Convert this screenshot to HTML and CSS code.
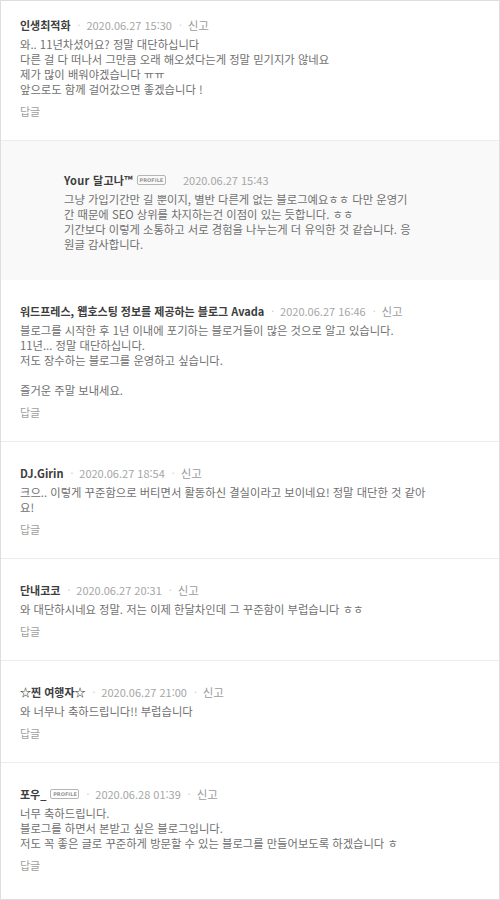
FILE: index.html
```html
<!DOCTYPE html>
<html lang="ko">
<head>
<meta charset="utf-8">
<link rel="stylesheet" href="styles.css">
</head>
<body>
<div class="comments">
  <div class="comment first">
    <div class="meta"><span class="name">인생최적화</span><span class="sep">·</span><span class="date">2020.06.27 15:30</span><span class="sep">·</span><span class="report">신고</span></div>
    <p class="text">와.. 11년차셨어요? 정말 대단하십니다<br>다른 걸 다 떠나서 그만큼 오래 해오셨다는게 정말 믿기지가 않네요<br>제가 많이 배워야겠습니다 ㅠㅠ<br>앞으로도 함께 걸어갔으면 좋겠습니다 !</p>
    <div class="reply-link">답글</div>
  </div>
  <div class="reply">
    <div class="meta"><span class="name">Your 달고나™</span><span class="badge">PROFILE</span><span class="date wide">2020.06.27 15:43</span></div>
    <p class="text">그냥 가입기간만 길 뿐이지, 별반 다른게 없는 블로그예요ㅎㅎ 다만 운영기<br>간 때문에 SEO 상위를 차지하는건 이점이 있는 듯합니다. ㅎㅎ<br>기간보다 이렇게 소통하고 서로 경험을 나누는게 더 유익한 것 같습니다. 응<br>원글 감사합니다.</p>
  </div>
  <div class="comment">
    <div class="meta"><span class="name">워드프레스, 웹호스팅 정보를 제공하는 블로그 Avada</span><span class="sep">·</span><span class="date">2020.06.27 16:46</span><span class="sep">·</span><span class="report">신고</span></div>
    <p class="text">블로그를 시작한 후 1년 이내에 포기하는 블로거들이 많은 것으로 알고 있습니다.<br>11년... 정말 대단하십니다.<br>저도 장수하는 블로그를 운영하고 싶습니다.<br><br>즐거운 주말 보내세요.</p>
    <div class="reply-link">답글</div>
  </div>
  <div class="comment">
    <div class="meta"><span class="name">DJ.Girin</span><span class="sep">·</span><span class="date">2020.06.27 18:54</span><span class="sep">·</span><span class="report">신고</span></div>
    <p class="text">크으.. 이렇게 꾸준함으로 버티면서 활동하신 결실이라고 보이네요! 정말 대단한 것 같아<br>요!</p>
    <div class="reply-link">답글</div>
  </div>
  <div class="comment">
    <div class="meta"><span class="name">단내코코</span><span class="sep">·</span><span class="date">2020.06.27 20:31</span><span class="sep">·</span><span class="report">신고</span></div>
    <p class="text">와 대단하시네요 정말. 저는 이제 한달차인데 그 꾸준함이 부럽습니다 ㅎㅎ</p>
    <div class="reply-link">답글</div>
  </div>
  <div class="comment">
    <div class="meta"><span class="name">☆찐 여행자☆</span><span class="sep">·</span><span class="date">2020.06.27 21:00</span><span class="sep">·</span><span class="report">신고</span></div>
    <p class="text">와 너무나 축하드립니다!! 부럽습니다</p>
    <div class="reply-link">답글</div>
  </div>
  <div class="comment last">
    <div class="meta"><span class="name">포우_</span><span class="badge">PROFILE</span><span class="sep">·</span><span class="date">2020.06.28 01:39</span><span class="sep">·</span><span class="report">신고</span></div>
    <p class="text">너무 축하드립니다.<br>블로그를 하면서 본받고 싶은 블로그입니다.<br>저도 꼭 좋은 글로 꾸준하게 방문할 수 있는 블로그를 만들어보도록 하겠습니다 ㅎ</p>
    <div class="reply-link">답글</div>
  </div>
</div>
</body>
</html>
```

FILE: styles.css
```css
* {
  box-sizing: border-box;
}

html, body {
  margin: 0;
  padding: 0;
  background: #ffffff;
}

body {
  font-family: "Noto Sans CJK KR", "Noto Sans", sans-serif;
  color: #666;
}

.comments {
  width: 500px;
  border: 1px solid #dedede;
  border-bottom-width: 2px;
}

.comment {
  padding: 23px 19px 21px 19px;
  border-top: 1px solid #ececec;
}

.comment.first {
  border-top: none;
  padding-top: 16px;
}

.comment.last {
  padding-bottom: 26px;
}

.reply {
  background: #f9f9f9;
  border-top: 1px solid #ececec;
  padding: 31px 19px 27px 63px;
}

.reply + .comment {
  border-top-color: #f9f9f9;
}

.meta {
  display: flex;
  align-items: center;
  height: 16px;
  font-size: 11px;
  line-height: 16px;
  white-space: nowrap;
}

.name {
  font-weight: bold;
  color: #3d3d3d;
  font-size: 11px;
}

.reply .name {
  letter-spacing: 0.3px;
}

.sep {
  color: #cccccc;
  margin: 0 6px 0 7px;
  font-size: 10px;
}

.date {
  color: #a6a6a6;
  font-size: 11px;
}

.date.wide {
  margin-left: 17px;
}

.report {
  color: #9c9c9c;
  font-size: 11.5px;
}

.badge {
  display: inline-flex;
  align-items: center;
  justify-content: center;
  margin-left: 4px;
  width: 29px;
  height: 10px;
  border: 1px solid #b5b5b5;
  border-radius: 2px;
  font-family: "DejaVu Sans", sans-serif;
  font-size: 5px;
  line-height: 8px;
  font-weight: bold;
  color: #9a9a9a;
}

.text {
  margin: 4px 0 0 0;
  font-size: 11.3px;
  line-height: 15px;
  color: #707070;
}

.reply-link {
  margin-top: 7px;
  font-size: 11px;
  line-height: 15px;
  color: #a0a0a0;
}
```
